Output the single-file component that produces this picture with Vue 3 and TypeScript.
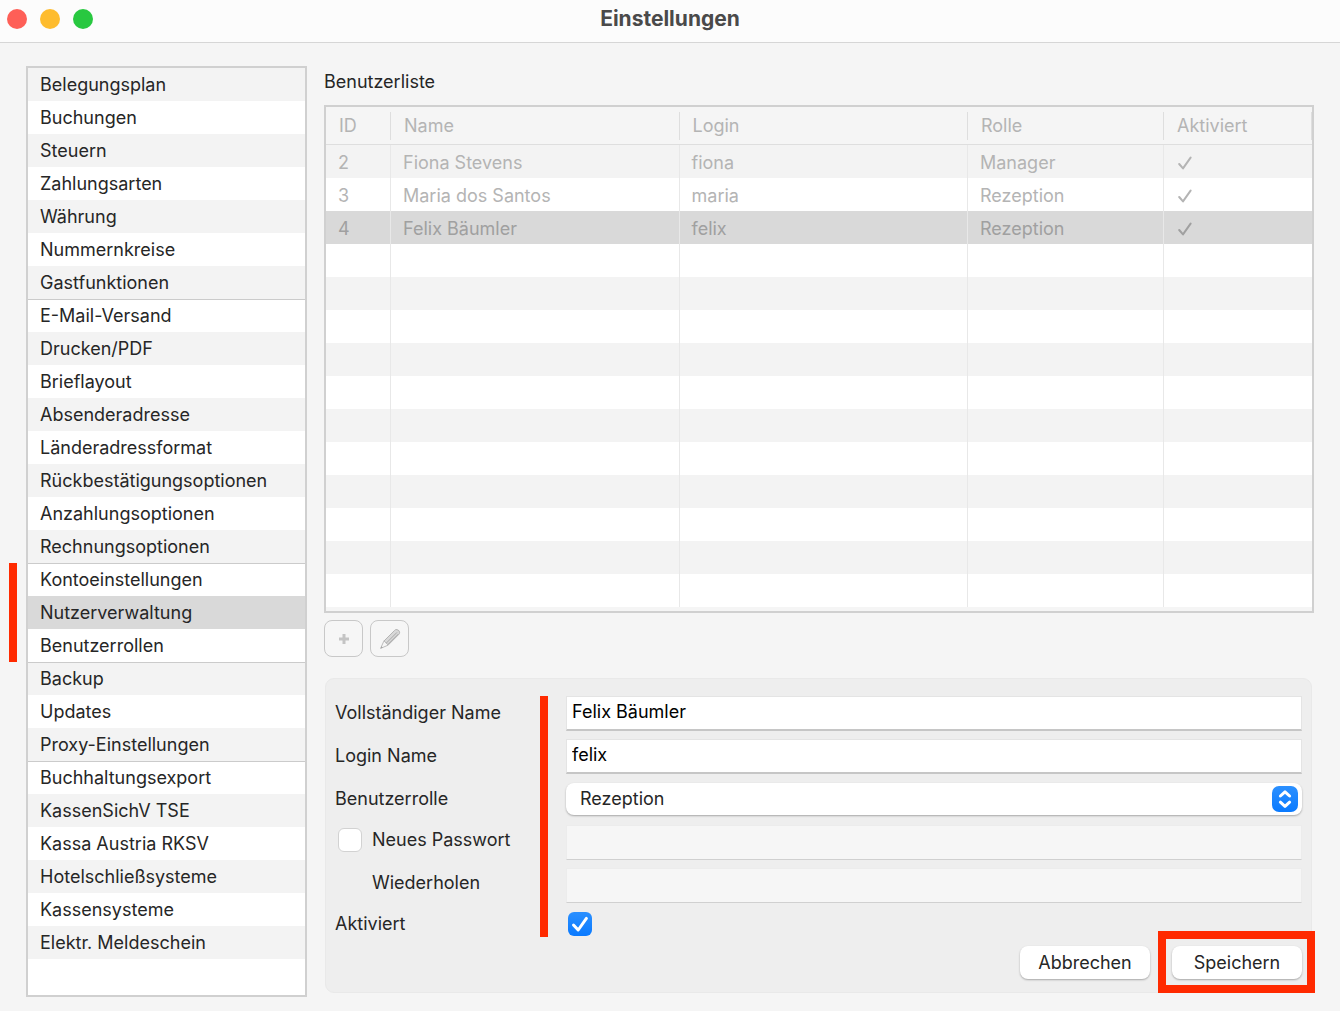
<script setup lang="ts">
import { ref } from 'vue'

interface Group {
  marked?: boolean
  items: string[]
}

interface User {
  id: number
  name: string
  login: string
  role: string
  active: boolean
}

const groups: Group[] = [
  {
    items: ['Belegungsplan', 'Buchungen', 'Steuern', 'Zahlungsarten', 'Währung', 'Nummernkreise', 'Gastfunktionen'],
  },
  {
    items: [
      'E-Mail-Versand',
      'Drucken/PDF',
      'Brieflayout',
      'Absenderadresse',
      'Länderadressformat',
      'Rückbestätigungsoptionen',
      'Anzahlungsoptionen',
      'Rechnungsoptionen',
    ],
  },
  { marked: true, items: ['Kontoeinstellungen', 'Nutzerverwaltung', 'Benutzerrollen'] },
  { items: ['Backup', 'Updates', 'Proxy-Einstellungen'] },
  {
    items: [
      'Buchhaltungsexport',
      'KassenSichV TSE',
      'Kassa Austria RKSV',
      'Hotelschließsysteme',
      'Kassensysteme',
      'Elektr. Meldeschein',
    ],
  },
]

// Stripes run through the whole list, across group borders.
let counter = 0
const sections = groups.map((group) => ({
  marked: group.marked === true,
  items: group.items.map((label) => ({ label, striped: counter++ % 2 === 0 })),
}))

const users: User[] = [
  { id: 2, name: 'Fiona Stevens', login: 'fiona', role: 'Manager', active: true },
  { id: 3, name: 'Maria dos Santos', login: 'maria', role: 'Rezeption', active: true },
  { id: 4, name: 'Felix Bäumler', login: 'felix', role: 'Rezeption', active: true },
]
const emptyRows = 11

const current = ref('Nutzerverwaltung')
const selectedId = ref(4)
const fullName = ref('Felix Bäumler')
const login = ref('felix')
const role = ref('Rezeption')
const changePassword = ref(false)
const password = ref('')
const passwordRepeat = ref('')
const active = ref(true)
</script>

<template>
  <div class="window">
    <header class="titlebar">
      <div class="lights">
        <button type="button" class="light red" aria-label="Schließen"></button>
        <button type="button" class="light yellow" aria-label="Minimieren"></button>
        <button type="button" class="light green" aria-label="Vergrößern"></button>
      </div>
      <h1>Einstellungen</h1>
    </header>

    <div class="content">
      <nav class="sidebar" aria-label="Einstellungen">
        <ul v-for="(section, i) in sections" :key="i" :class="{ marked: section.marked }">
          <li v-for="item in section.items" :key="item.label">
            <a
              href="#"
              :class="{ striped: item.striped, current: item.label === current }"
              @click.prevent="current = item.label"
              >{{ item.label }}</a
            >
          </li>
        </ul>
      </nav>

      <main class="main">
        <h2>Benutzerliste</h2>
        <div class="table-box">
          <table>
            <colgroup>
              <col class="col-id" />
              <col />
              <col />
              <col class="col-role" />
              <col class="col-active" />
            </colgroup>
            <thead>
              <tr>
                <th><span>ID</span></th>
                <th><span>Name</span></th>
                <th><span>Login</span></th>
                <th><span>Rolle</span></th>
                <th><span>Aktiviert</span></th>
              </tr>
            </thead>
            <tbody>
              <tr v-for="user in users" :key="user.id" :class="{ selected: user.id === selectedId }">
                <td>{{ user.id }}</td>
                <td>{{ user.name }}</td>
                <td>{{ user.login }}</td>
                <td>{{ user.role }}</td>
                <td>
                  <svg v-if="user.active" class="tick" viewBox="0 0 14 14" role="img" aria-label="Ja">
                    <path d="M1.2 8 L5 12.4 L12.6 1.6" />
                  </svg>
                </td>
              </tr>
              <tr v-for="n in emptyRows" :key="'empty' + n">
                <td></td>
                <td></td>
                <td></td>
                <td></td>
                <td></td>
              </tr>
            </tbody>
          </table>
        </div>

        <div class="tools">
          <button type="button" class="tool" disabled aria-label="Hinzufügen">
            <svg viewBox="0 0 24 24" class="plus"><path d="M12 7V17M7 12H17" /></svg>
          </button>
          <button type="button" class="tool" disabled aria-label="Bearbeiten">
            <svg viewBox="0 0 24 24" class="pencil">
              <path class="body" d="M5.8 14.2 L16.6 3.4 Q17.6 2.2 19 2.6 Q21.6 3.4 21.6 5.2 Q21.8 6.4 20.8 7.4 L10 18.2 Z" />
              <path class="tip" d="M5.8 14.2 L2.6 21.4 L10 18.2 Q9.6 16.4 8 16.2 Q7.6 14.4 5.8 14.2 Z" />
              <path class="shade" d="M8.4 16 L19 5.4M10 17.4 L20.4 7" />
              <path class="lead" d="M2.6 21.4 L3.6 19.2 L4.8 20.4 Z" />
            </svg>
          </button>
        </div>

        <form class="panel" @submit.prevent>
          <div class="fields">
            <span class="marker"></span>

            <label for="full-name">Vollständiger Name</label>
            <input id="full-name" v-model="fullName" class="text" type="text" />

            <label for="login-name">Login Name</label>
            <input id="login-name" v-model="login" class="text" type="text" />

            <label for="role">Benutzerrolle</label>
            <div class="select">
              <select id="role" v-model="role">
                <option>Rezeption</option>
                <option>Manager</option>
              </select>
              <svg viewBox="0 0 26 26" aria-hidden="true">
                <path d="M8.4 10 L13 5.8 L17.6 10M8.4 16.2 L13 20.4 L17.6 16.2" />
              </svg>
            </div>

            <div class="password-label">
              <span class="check">
                <input id="change-password" v-model="changePassword" type="checkbox" />
                <svg viewBox="0 0 24 24" aria-hidden="true"><path d="M5.5 13 L10.2 18 L18.4 6.4" /></svg>
              </span>
              <label for="change-password">Neues Passwort</label>
            </div>
            <input
              v-model="password"
              class="text"
              type="password"
              aria-label="Neues Passwort"
              :disabled="!changePassword"
            />

            <div class="password-label repeat">
              <label for="password-repeat">Wiederholen</label>
            </div>
            <input
              id="password-repeat"
              v-model="passwordRepeat"
              class="text"
              type="password"
              :disabled="!changePassword"
            />

            <label for="active">Aktiviert</label>
            <span class="check">
              <input id="active" v-model="active" type="checkbox" />
              <svg viewBox="0 0 24 24" aria-hidden="true"><path d="M5.5 13 L10.2 18 L18.4 6.4" /></svg>
            </span>
          </div>

          <div class="actions">
            <button type="button" class="push">Abbrechen</button>
            <span class="highlight">
              <button type="submit" class="push">Speichern</button>
            </span>
          </div>
        </form>
      </main>
    </div>
  </div>
</template>

<style>
body {
  margin: 0;
  background: #f5f5f5;
}
</style>

<style scoped>
.window,
.window * {
  box-sizing: border-box;
}

.window {
  display: flex;
  flex-direction: column;
  min-height: 100vh;
  background: #f5f5f5;
  color: #262626;
  font: 18px/24px Inter, 'Liberation Sans', sans-serif;
}

button,
input,
select {
  margin: 0;
  font: inherit;
  color: inherit;
}

.titlebar {
  display: grid;
  grid-template-columns: 1fr auto 1fr;
  align-items: center;
  height: 43px;
  padding: 0 7px 4px;
  background: #fcfcfc;
  border-bottom: 1px solid #d6d6d6;
}

.lights {
  display: flex;
  gap: 13px;
}

.light {
  width: 20px;
  height: 20px;
  padding: 0;
  border: 0;
  border-radius: 50%;
}

.red {
  background: #fe5f57;
}

.yellow {
  background: #febc2e;
}

.green {
  background: #28c840;
}

h1 {
  margin: 0;
  font-size: 21px;
  font-weight: 700;
  color: #4a4a4a;
}

.content {
  flex: 1;
  display: flex;
  gap: 17px;
  padding: 23px 26px 14px;
}

.sidebar {
  flex: none;
  width: 281px;
  border: 2px solid #d0d0d0;
  background: #fff;
}

.sidebar ul {
  position: relative;
  margin: 0;
  padding: 0;
  list-style: none;
}

.sidebar ul + ul li:first-child a {
  box-shadow: inset 0 1px #cbcbcb;
}

.sidebar a {
  display: block;
  padding: 0 12px;
  line-height: 33px;
  color: inherit;
  text-decoration: none;
  white-space: nowrap;
}

.sidebar .striped {
  background: #f3f3f3;
}

.sidebar .current {
  background: #d9d9d9;
}

.marked::before {
  content: '';
  position: absolute;
  top: 0;
  bottom: 0;
  left: -19px;
  width: 8px;
  background: #ff2a00;
}

.main {
  flex: 1;
  min-width: 0;
  display: flex;
  flex-direction: column;
  padding-bottom: 4px;
}

h2 {
  margin: 4px 0 11px;
  font-size: 18px;
  font-weight: 400;
}

.table-box {
  flex: 1;
  padding-bottom: 4px;
  border: 2px solid #d0d0d0;
}

table {
  width: 100%;
  table-layout: fixed;
  border-collapse: separate;
  border-spacing: 0;
  color: #b4b4b4;
}

.col-id {
  width: 65px;
}

.col-role {
  width: 196px;
}

.col-active {
  width: 148px;
}

th {
  height: 38px;
  padding: 0;
  border-bottom: 1px solid #dedede;
  font-weight: 400;
  text-align: left;
}

th span {
  display: block;
  padding: 2px 13px;
  border-right: 1px solid #dedede;
}

td {
  height: 33px;
  padding: 2px 12px 0;
  border-right: 1px solid #e8e8e8;
}

td:last-child {
  border-right: 0;
}

tbody tr {
  background: #fff;
}

tbody tr:nth-child(odd) {
  background: #f3f3f3;
}

tbody tr.selected {
  background: #d9d9d9;
  color: #a0a0a0;
}

.tick {
  display: block;
  width: 14px;
  height: 14px;
  margin-left: 2px;
  fill: none;
  stroke: currentColor;
  stroke-width: 2;
  stroke-linecap: round;
  stroke-linejoin: round;
}

.tools {
  display: flex;
  gap: 7px;
  margin: 7px 0 21px;
}

.tool {
  display: grid;
  place-items: center;
  width: 39px;
  height: 37px;
  padding: 0;
  border: 1px solid #c8c8c8;
  border-radius: 8px;
  background: #f6f6f6;
}

.tool svg {
  width: 24px;
  height: 24px;
  fill: none;
}

.plus {
  stroke: #c4c4c4;
  stroke-width: 3;
}

.pencil .body {
  fill: #d8d8d8;
  stroke: #b4b4b4;
}

.pencil .tip {
  fill: #f6f6f6;
  stroke: #bcbcbc;
}

.pencil .shade {
  stroke: #aaa;
}

.pencil .lead {
  fill: #a0a0a0;
}

.panel {
  margin: 0 2px 0 1px;
  padding: 17px 9px 13px;
  border: 1px solid #e9e9e9;
  border-radius: 9px;
  background: #eee;
}

.fields {
  display: grid;
  grid-template-columns: 205px 8px 1fr;
  grid-template-rows: repeat(5, 34px) 26px;
  row-gap: 9px;
  align-items: center;
}

.fields > * {
  grid-column: 3;
}

.fields > label,
.password-label {
  grid-column: 1;
}

.fields > input,
.fields > .select {
  margin-left: 18px;
}

.fields > .check {
  margin-left: 20px;
}

.fields > .marker {
  grid-column: 2;
  grid-row: 1 / -1;
  align-self: stretch;
  background: #ff2a00;
}

.text {
  height: 35px;
  padding: 0 5px 3px;
  border: 1px solid #e4e4e4;
  border-bottom: 2px solid #c6c6c6;
  border-radius: 0;
  background: #fff;
  color: #000;
  outline: 0;
}

.text:disabled {
  border-color: #ececec;
  border-bottom: 1px solid #d0d0d0;
  background: #f6f6f6;
}

.select {
  position: relative;
}

.select select {
  display: block;
  width: 100%;
  height: 32px;
  padding: 0 40px 0 14px;
  border: 0;
  border-radius: 8px;
  background: #fff;
  box-shadow: 0 1px 2px rgba(0, 0, 0, 0.3);
  appearance: none;
}

.select svg {
  position: absolute;
  top: 3px;
  right: 4px;
  width: 26px;
  height: 26px;
  border-radius: 7px;
  background: linear-gradient(#2b90ff, #0a7aff);
  fill: none;
  stroke: #fff;
  stroke-width: 3;
  stroke-linecap: round;
  stroke-linejoin: round;
  pointer-events: none;
}

.password-label {
  display: flex;
  align-items: center;
  gap: 10px;
  padding: 0 0 4px 3px;
}

.password-label.repeat {
  padding-left: 37px;
}

.check {
  position: relative;
  display: block;
  width: 24px;
  height: 24px;
}

.check input {
  display: block;
  width: 24px;
  height: 24px;
  border: 1px solid #d2d2d2;
  border-radius: 6px;
  background: #fff;
  appearance: none;
}

.check input:checked {
  border: 0;
  background: linear-gradient(#2b90ff, #0a7aff);
}

.check svg {
  position: absolute;
  inset: 0;
  fill: none;
  stroke: #fff;
  stroke-width: 3;
  stroke-linecap: round;
  stroke-linejoin: round;
  pointer-events: none;
}

.actions {
  display: flex;
  justify-content: flex-end;
  gap: 22px;
  margin-top: 9px;
}

.push {
  display: block;
  width: 130px;
  height: 33px;
  padding: 0;
  border: 0;
  border-radius: 8px;
  background: #fff;
  box-shadow: 0 1px 2px rgba(0, 0, 0, 0.3);
}

.highlight {
  position: relative;
}

.highlight::before {
  content: '';
  position: absolute;
  inset: -15px -13px -14px -14px;
  border: 8px solid #ff2a00;
  pointer-events: none;
}
</style>
